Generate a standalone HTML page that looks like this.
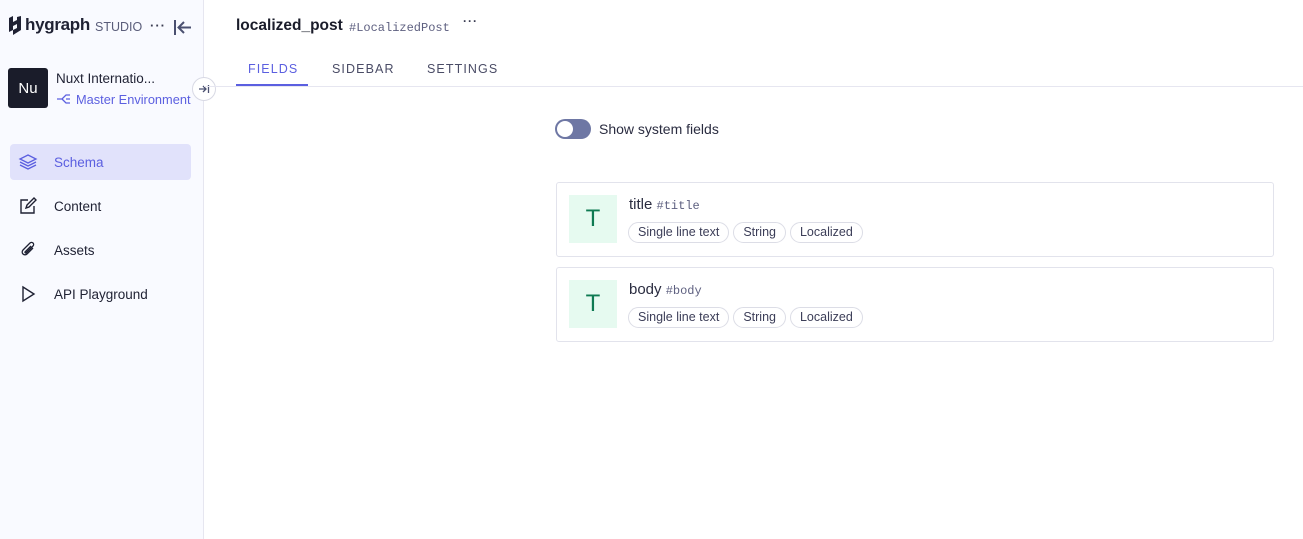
<!DOCTYPE html>
<html><head><style>
*{box-sizing:border-box;margin:0;padding:0}
body{width:1303px;height:539px;font-family:"Liberation Sans",sans-serif;background:#fff;position:relative;overflow:hidden;color:#1f2133}
.side{position:absolute;left:0;top:0;width:204px;height:539px;background:#f9faff;border-right:1px solid #e6e6f0}
.abs{position:absolute}
.nav{position:absolute;left:10px;width:181px;height:36px;border-radius:4px;display:flex;align-items:center;font-size:13.5px;color:#1f2133}
.nav svg{position:absolute;left:8px}
.nav span{position:absolute;left:44px}
.mono{font-family:"Liberation Mono",monospace;color:#5e6080}
.card{position:absolute;left:556px;width:718px;height:75px;border:1px solid #e2e3ec;border-radius:3px}
.ic{position:absolute;left:12px;top:12px;width:48px;height:48px;background:#e6faf0;color:#0e7a52;font-size:24px;display:flex;align-items:center;justify-content:center}
.nm{position:absolute;left:72px;top:13px;font-size:15px;color:#2a2c40}
.tags{position:absolute;left:71px;top:39px;display:flex;gap:4px}
.tag{border:1px solid #dcdde6;border-radius:11px;height:21px;padding:0 9px;font-size:12.5px;color:#3c3e58;line-height:19px}
</style></head><body>
<div class="side">
 <svg class="abs" style="left:8px;top:16px" width="14" height="22" viewBox="0 0 14 22"><path d="M1 2l4-2v6l4-2V1l4-1v14l-8 5v-5l4-2V8L5 10v4l-4 2z" fill="#1f2133"/></svg>
 <div class="abs" style="left:25px;top:15px;font-size:17px;font-weight:bold;letter-spacing:-0.3px">hygraph</div>
 <div class="abs" style="left:95px;top:20px;font-size:12.5px;color:#5a5d7a">STUDIO</div>
 <div class="abs" style="left:150px;top:18px;font-size:13px;color:#3a3c52;letter-spacing:1px;font-weight:bold">···</div>
 <svg class="abs" style="left:173px;top:19px" width="20" height="17" viewBox="0 0 20 17"><path d="M2 1v15M18 8.5H6M11 3l-5.5 5.5L11 14" stroke="#4b5070" stroke-width="2" fill="none"/></svg>
 <div class="abs" style="left:8px;top:68px;width:40px;height:40px;background:#1a1c2a;border-radius:3px;color:#fff;font-size:15px;display:flex;align-items:center;justify-content:center">Nu</div>
 <div class="abs" style="left:56px;top:71px;font-size:13.5px">Nuxt Internatio...</div>
 <svg class="abs" style="left:57px;top:93px" width="14" height="12" viewBox="0 0 14 12"><path d="M0 6h5l4-4h4M9 6h4M5 6l4 4h4" stroke="#5b5fe0" stroke-width="1.3" fill="none"/></svg>
 <div class="abs" style="left:76px;top:92px;font-size:12.8px;color:#5b5fe0">Master Environment</div>
 <div class="nav" style="top:144px;background:#e1e2fb;color:#5b5fe0"><svg width="20" height="20" viewBox="0 0 20 20" fill="none" stroke="#5b5fe0" stroke-width="1.3"><path d="M10 3l8 4-8 4-8-4z M2 10l8 4 8-4 M2 13l8 4 8-4"/></svg><span>Schema</span></div>
 <div class="nav" style="top:188px"><svg width="20" height="20" viewBox="0 0 20 20" fill="none" stroke="#1f2133" stroke-width="1.4"><path d="M10 4H3v13h13v-7M8 12l1-3 7-7 2 2-7 7z"/></svg><span>Content</span></div>
 <div class="nav" style="top:232px"><svg width="20" height="20" viewBox="0 0 20 20" fill="none" stroke="#1f2133" stroke-width="1.3"><path d="M15 8l-6 6a2.5 2.5 0 01-4-4l7-7a1.7 1.7 0 013 3l-7 7a.8.8 0 01-1-1l6-6"/></svg><span>Assets</span></div>
 <div class="nav" style="top:276px"><svg width="20" height="20" viewBox="0 0 20 20" fill="none" stroke="#1f2133" stroke-width="1.4"><path d="M5 3l11 7-11 7z"/></svg><span>API Playground</span></div>
</div>
<div class="abs" style="left:192px;top:77px;width:24px;height:24px;border-radius:50%;background:#fff;border:1px solid #d8d9e4"><svg style="position:absolute;left:5px;top:6px" width="12" height="10" viewBox="0 0 12 10"><path d="M1 5h7M5 2l3 3-3 3M10.5 1v8" stroke="#4b5070" stroke-width="1.3" fill="none"/></svg></div>
<div class="abs" style="left:236px;top:17px;font-size:15.5px;font-weight:bold;color:#1a1c2a">localized_post</div>
<div class="abs mono" style="left:349px;top:21px;font-size:12px">#LocalizedPost</div>
<div class="abs" style="left:463px;top:14px;font-size:12px;color:#3a3c52;font-weight:bold;letter-spacing:1px">···</div>
<div class="abs" style="left:248px;top:62px;font-size:12.5px;letter-spacing:1.1px;color:#5b5fe0">FIELDS</div>
<div class="abs" style="left:332px;top:62px;font-size:12.5px;letter-spacing:1.1px;color:#4a4c66">SIDEBAR</div>
<div class="abs" style="left:427px;top:62px;font-size:12.5px;letter-spacing:1.1px;color:#4a4c66">SETTINGS</div>
<div class="abs" style="left:204px;top:86px;width:1099px;height:1px;background:#e6e6f0"></div>
<div class="abs" style="left:236px;top:84px;width:72px;height:2px;background:#5b5fe0"></div>
<div class="abs" style="left:555px;top:119px;width:36px;height:20px;border-radius:10px;background:#6e77a4"><div style="position:absolute;left:2px;top:2px;width:16px;height:16px;border-radius:50%;background:#fff"></div></div>
<div class="abs" style="left:599px;top:121px;font-size:14px;color:#2a2c40">Show system fields</div>
<div class="card" style="top:182px"><div class="ic">T</div><div class="nm">title <span class="mono" style="font-size:12px">#title</span></div><div class="tags"><div class="tag">Single line text</div><div class="tag">String</div><div class="tag">Localized</div></div></div>
<div class="card" style="top:267px"><div class="ic">T</div><div class="nm">body <span class="mono" style="font-size:12px">#body</span></div><div class="tags"><div class="tag">Single line text</div><div class="tag">String</div><div class="tag">Localized</div></div></div>
</body></html>
